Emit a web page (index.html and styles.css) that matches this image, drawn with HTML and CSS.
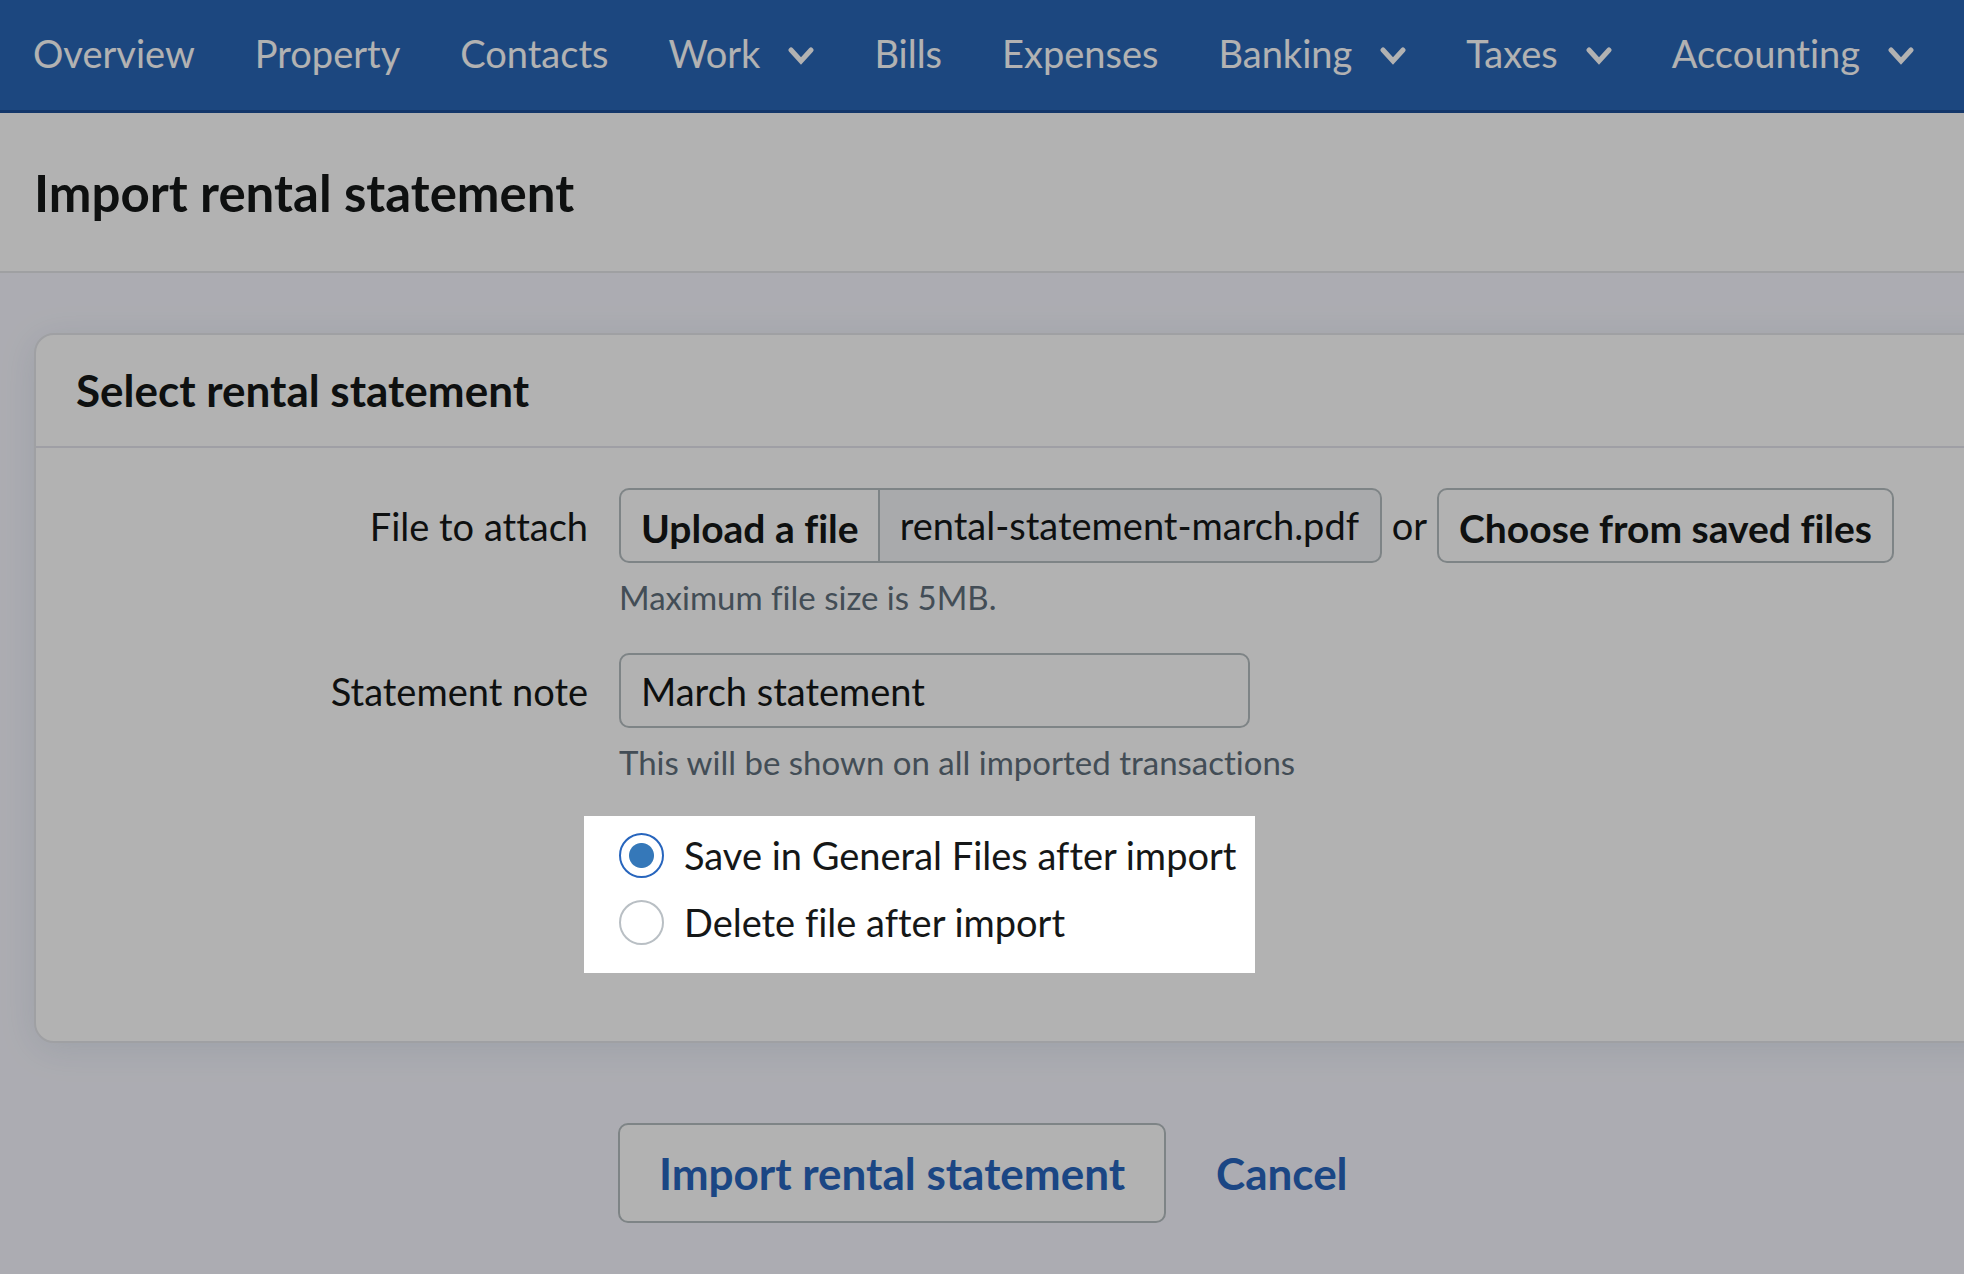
FILE: index.html
```html
<!DOCTYPE html>
<html lang="en">
<head>
    <meta charset="UTF-8">
    <title>Import rental statement</title>
    <link rel="stylesheet" href="styles.css">
</head>
<body>
    <nav class="nav">
        <a class="nav-item" href="#">Overview</a>
        <a class="nav-item" href="#">Property</a>
        <a class="nav-item" href="#">Contacts</a>
        <button class="nav-item" type="button">Work
            <svg class="chevron" viewBox="0 0 26 20"><path d="M3 4 L13 15 L23 4"/></svg>
        </button>
        <a class="nav-item" href="#">Bills</a>
        <a class="nav-item" href="#">Expenses</a>
        <button class="nav-item" type="button">Banking
            <svg class="chevron" viewBox="0 0 26 20"><path d="M3 4 L13 15 L23 4"/></svg>
        </button>
        <button class="nav-item" type="button">Taxes
            <svg class="chevron" viewBox="0 0 26 20"><path d="M3 4 L13 15 L23 4"/></svg>
        </button>
        <button class="nav-item" type="button">Accounting
            <svg class="chevron" viewBox="0 0 26 20"><path d="M3 4 L13 15 L23 4"/></svg>
        </button>
    </nav>

    <header class="page-header">
        <h1>Import rental statement</h1>
    </header>

    <form class="import-form">
        <section class="card">
            <h2 class="card-title">Select rental statement</h2>
            <div class="card-body">
                <div class="row">
                    <label class="row-label" for="file-name">File to attach</label>
                    <div class="row-field">
                        <div class="file-line">
                            <div class="file-group">
                                <button class="button upload" type="button">Upload a file</button>
                                <input class="text-input file-name" id="file-name" type="text" value="rental-statement-march.pdf" readonly>
                            </div>
                            <span>or</span>
                            <button class="button" type="button">Choose from saved files</button>
                        </div>
                        <p class="hint">Maximum file size is 5MB.</p>
                    </div>
                </div>
                <div class="row">
                    <label class="row-label" for="note">Statement note</label>
                    <div class="row-field">
                        <input class="text-input note" id="note" type="text" value="March statement">
                        <p class="hint">This will be shown on all imported transactions</p>
                    </div>
                </div>
                <fieldset class="after-import" aria-label="After import">
                    <label class="option"><input class="radio" type="radio" name="after" value="save" checked>Save in General Files after import</label>
                    <label class="option"><input class="radio" type="radio" name="after" value="delete">Delete file after import</label>
                </fieldset>
            </div>
        </section>

        <div class="actions">
            <button class="submit" type="button">Import rental statement</button>
            <a class="cancel" href="#">Cancel</a>
        </div>
    </form>
</body>
</html>
```
FILE: styles.css
```css
* { box-sizing: border-box; }
body { margin: 0; min-height: 100vh; background-color: #f7f7ff; color: #151717; font-family: Lato, sans-serif; font-size: 38px; font-variant-ligatures: none; overflow-x: hidden; }
button, input { font: inherit; font-variant-ligatures: none; color: inherit; }
button { cursor: pointer; }
h1, h2, p { margin: 0; }

.nav { display: flex; gap: 60px; padding: 27px 33px 31px; background-color: #2966b7; border-bottom: 3px solid #1d4f98; }
.nav-item { display: flex; align-items: center; gap: 28px; padding: 0; border: 0; background: none; color: #fff; line-height: 52px; text-decoration: none; white-space: nowrap; }
.chevron { width: 26px; height: 20px; margin-top: 5px; fill: none; stroke: #fff; stroke-width: 5; stroke-linecap: round; }

.page-header { padding: 49px 34px 47px; background-color: #fff; border-bottom: 2px solid #e4e5e9; }
.page-header h1 { font-size: 51px; line-height: 62px; font-weight: 700; }

.import-form { padding: 60px 0 0 34px; }
/* the card runs off the right side of the window */
.card { margin-right: -60px; background-color: #fff; border: 2px solid #e4e5ea; border-radius: 20px; box-shadow: 0 6px 36px rgba(80, 120, 140, 0.13); }
.card-title { padding: 27px 40px; border-bottom: 2px solid #e4e4ec; font-size: 44px; line-height: 57px; font-weight: 700; }
.card-body { padding: 40px 0 68px; }

.row { display: grid; grid-template-columns: 552px 1fr; column-gap: 31px; }
.row + .row { margin-top: 37px; }
.row-label { text-align: right; line-height: 77px; }
.file-line { display: flex; align-items: center; gap: 10px; height: 75px; line-height: 77px; }
.file-group { display: flex; }
.button { height: 75px; padding: 0 20px; border: 2px solid #b5bdc0; border-radius: 10px; background-color: #fff; font-size: 39px; font-weight: 700; white-space: nowrap; }
.upload { padding: 0 19px 0 20px; border-right: 0; border-radius: 10px 0 0 10px; }
.text-input { height: 75px; padding: 0 20px; border: 2px solid #b5bdc0; border-radius: 10px; background-color: #fff; outline: none; }
.file-name { width: 504px; border-radius: 0 10px 10px 0; background-color: #f2f4f7; }
.note { display: block; width: 631px; }
.hint { margin-top: 14px; margin-bottom: -1px; color: #606f7b; font-size: 33px; line-height: 40px; }

/* spotlight: everything outside this box is dimmed */
.after-import { position: relative; display: flex; flex-direction: column; gap: 22px; width: 670px; margin: 35px 0 0 548px; padding: 17px 19px 28px 35px; border: 0; background-color: #fff; box-shadow: 0 0 0 9999px rgba(0, 0, 0, 0.3); }
.option { display: flex; align-items: center; gap: 20px; line-height: 47px; height: 45px; white-space: nowrap; }
.radio { flex: none; appearance: none; width: 45px; height: 45px; margin: 0; border: 2px solid #b9bfc4; border-radius: 50%; background-color: #fff; }
.radio:checked { border-color: #2765bd; background-image: radial-gradient(circle, #3578b9 12px, transparent 13px); }

.actions { display: flex; align-items: center; gap: 50px; padding: 80px 0 51px 584px; font-size: 44px; font-weight: 700; color: #2765bd; }
.submit { height: 100px; padding: 0 39px; border: 2px solid #b5bdc0; border-radius: 10px; background-color: #fff; }
.cancel { color: inherit; text-decoration: none; }
```
